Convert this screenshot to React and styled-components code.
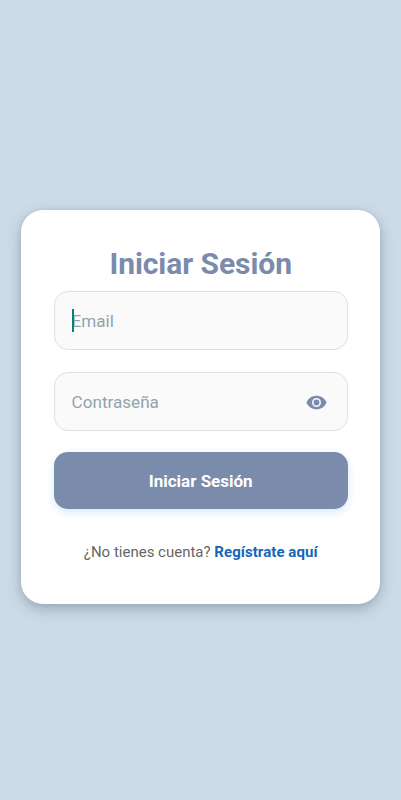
import React from 'react';
import styled, { createGlobalStyle } from 'styled-components';

const GlobalStyle = createGlobalStyle`
  * {
    box-sizing: border-box;
  }

  body {
    margin: 0;
    background: #cddbe8;
    font-family: Roboto, sans-serif;
  }
`;

const Screen = styled.main`
  min-height: 800px;
  padding: 210px 21.4px 0 21.2px;
`;

const Card = styled.form`
  height: 394px;
  padding: 36px 31.8px 0 32.4px;
  background: #ffffff;
  border-radius: 22px;
  box-shadow: 0 5px 14px rgba(60, 75, 95, 0.34), 0 0 4px rgba(60, 75, 95, 0.08);
`;

const Title = styled.h1`
  margin: 0 0 9px;
  color: #7a8bab;
  font-size: 30px;
  font-weight: 700;
  letter-spacing: -0.06px;
  line-height: 36px;
  text-align: center;
`;

const Field = styled.div`
  display: flex;
  align-items: center;
  height: 59px;
  margin-bottom: ${({ $gap }) => $gap}px;
  padding: 0 20px 0 17px;
  background: #fafafa;
  border: 1px solid #dfe0e1;
  border-radius: 14px;
`;

/* Sits on top of the first letter of the placeholder */
const Caret = styled.span`
  z-index: 1;
  width: 2px;
  height: 23px;
  margin-right: -2px;
  background: #0c8070;
`;

const Placeholder = styled.span`
  flex: 1;
  color: #90a4ae;
  font-size: 17.1px;
  line-height: 22px;
`;

const EyeButton = styled.button`
  display: flex;
  padding: 1px 0 0;
  border: 0;
  background: none;
  color: #7a8bab;
`;

const SubmitButton = styled.button`
  display: block;
  width: 100%;
  height: 57px;
  padding: 0;
  border: 0;
  border-radius: 14px;
  background: #7a8bab;
  box-shadow: 0 3px 9px rgba(33, 150, 243, 0.2);
  color: #ffffff;
  font-family: inherit;
  font-size: 17px;
  font-weight: 700;
`;

const Prompt = styled.p`
  margin: 33px 0 0;
  color: #666666;
  font-size: 15px;
  line-height: 20px;
  text-align: center;
  white-space: nowrap;
`;

const RegisterLink = styled.a`
  color: #1368bb;
  font-weight: 700;
  letter-spacing: 0.06px;
  text-decoration: none;
`;

const EyeIcon = () => (
  <svg width="21" height="21" viewBox="0 0 21 21" fill="none">
    <path
      d="M0.4 10.5C2.2 6.3 6 3.7 10.5 3.7S18.8 6.3 20.6 10.5C18.8 14.7 15 17.3 10.5 17.3S2.2 14.7 0.4 10.5Z"
      fill="currentColor"
    />
    <circle cx="10.5" cy="10.5" r="3.7" stroke="#fafafa" strokeWidth="1.6" />
  </svg>
);

const App = () => {
  return (
    <>
      <GlobalStyle />
      <Screen>
        <Card>
          <Title>Iniciar Sesión</Title>

          <Field $gap={22}>
            <Caret />
            <Placeholder>Email</Placeholder>
          </Field>

          <Field $gap={21}>
            <Placeholder>Contraseña</Placeholder>
            <EyeButton type="button">
              <EyeIcon />
            </EyeButton>
          </Field>

          <SubmitButton type="button">Iniciar Sesión</SubmitButton>

          <Prompt>
            ¿No tienes cuenta? <RegisterLink href="#">Regístrate aquí</RegisterLink>
          </Prompt>
        </Card>
      </Screen>
    </>
  );
};

export default App;
